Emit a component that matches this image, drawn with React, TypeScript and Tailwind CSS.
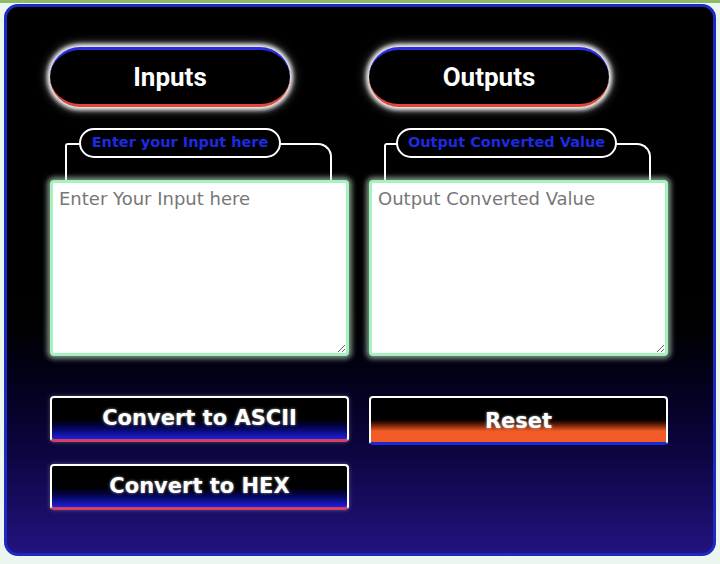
import React from 'react';

const verdana = "font-['DejaVu_Sans','Verdana',sans-serif]";

function HeaderPill({ label }: { label: string }) {
  return (
    <div className="flex h-[60px] w-[240px] items-center justify-center rounded-full border-t-[3px] border-b-[3px] border-t-[#2a2ee0] border-b-[#e0463a] bg-black shadow-[0_0_4px_3px_rgba(255,255,255,0.95),0_0_10px_4px_rgba(255,255,255,0.35)]">
      <span className="font-['Roboto',sans-serif] text-[26px] font-bold text-white">{label}</span>
    </div>
  );
}

function Field({ label, placeholder, pillWidth, pillLeft }: { label: string; placeholder: string; pillWidth: string; pillLeft: string }) {
  return (
    <div>
      <div className="mx-[15px] mr-[17px] mt-[36px] h-[37px] rounded-tl-[3px] rounded-tr-[14px] border-x-2 border-t-2 border-white">
        <div
          className={`-mt-[17px] ${pillLeft} ${pillWidth} flex h-[30px] items-center justify-center rounded-full border-2 border-white bg-black`}
        >
          <span className={`${verdana} whitespace-nowrap text-[14.5px] font-bold text-[#1c2be0]`}>{label}</span>
        </div>
      </div>
      <textarea
        placeholder={placeholder}
        className={`${verdana} block h-[176px] w-full rounded-[4px] border-[3px] border-[#a6f2bf] bg-white px-[6px] py-[2px] text-[18px] text-gray-700 placeholder:text-[#777777] shadow-[0_0_5px_3px_rgba(200,235,205,0.6)] outline-none`}
      />
    </div>
  );
}

function ActionButton({ label, reset }: { label: string; reset?: boolean }) {
  return (
    <button
      type="button"
      className={
        reset
          ? `${verdana} flex h-[49px] w-full items-center justify-center rounded-[4px] border-x-2 border-t-2 border-b-[3px] border-x-white border-t-white border-b-[#1a2ad8] bg-linear-to-b from-black from-45% to-[#f25a26] to-75% pt-[3px] text-[21px] font-bold text-white [text-shadow:0_0_3px_rgba(255,255,255,0.6)]`
          : `${verdana} flex h-[46px] w-full items-center justify-center rounded-[4px] border-x-2 border-t-2 border-b-[3px] border-x-white border-t-white border-b-[#d8405a] bg-linear-to-b from-black from-45% to-[#1c20e0] text-[21px] font-bold text-white shadow-[0_0_4px_rgba(255,255,255,0.3)] [text-shadow:0_0_3px_rgba(255,255,255,0.6)]`
      }
    >
      {label}
    </button>
  );
}

export default function App() {
  return (
    <div className="min-h-[564px] w-[720px] bg-[#eaf6ee]">
      <div className="h-[3px] bg-[#8dba68]" />
      <div className="mx-[4px] mt-[1px] h-[552px] rounded-[14px] border-[3px] border-[#1c2ac4] bg-linear-to-b from-black from-50% to-[#22137f] pl-[43px] pr-[45px] pt-[40px]">
        <div className="grid grid-cols-2 gap-x-[20px]">
          <div>
            <HeaderPill label="Inputs" />
            <Field label="Enter your Input here" placeholder="Enter Your Input here" pillWidth="w-[202px]" pillLeft="ml-[12px]" />
            <div className="mt-[40px] flex flex-col gap-[22px]">
              <ActionButton label="Convert to ASCII" />
              <ActionButton label="Convert to HEX" />
            </div>
          </div>
          <div>
            <HeaderPill label="Outputs" />
            <Field label="Output Converted Value" placeholder="Output Converted Value" pillWidth="w-[221px]" pillLeft="ml-[10px]" />
            <div className="mt-[40px]">
              <ActionButton label="Reset" reset />
            </div>
          </div>
        </div>
      </div>
    </div>
  );
}
